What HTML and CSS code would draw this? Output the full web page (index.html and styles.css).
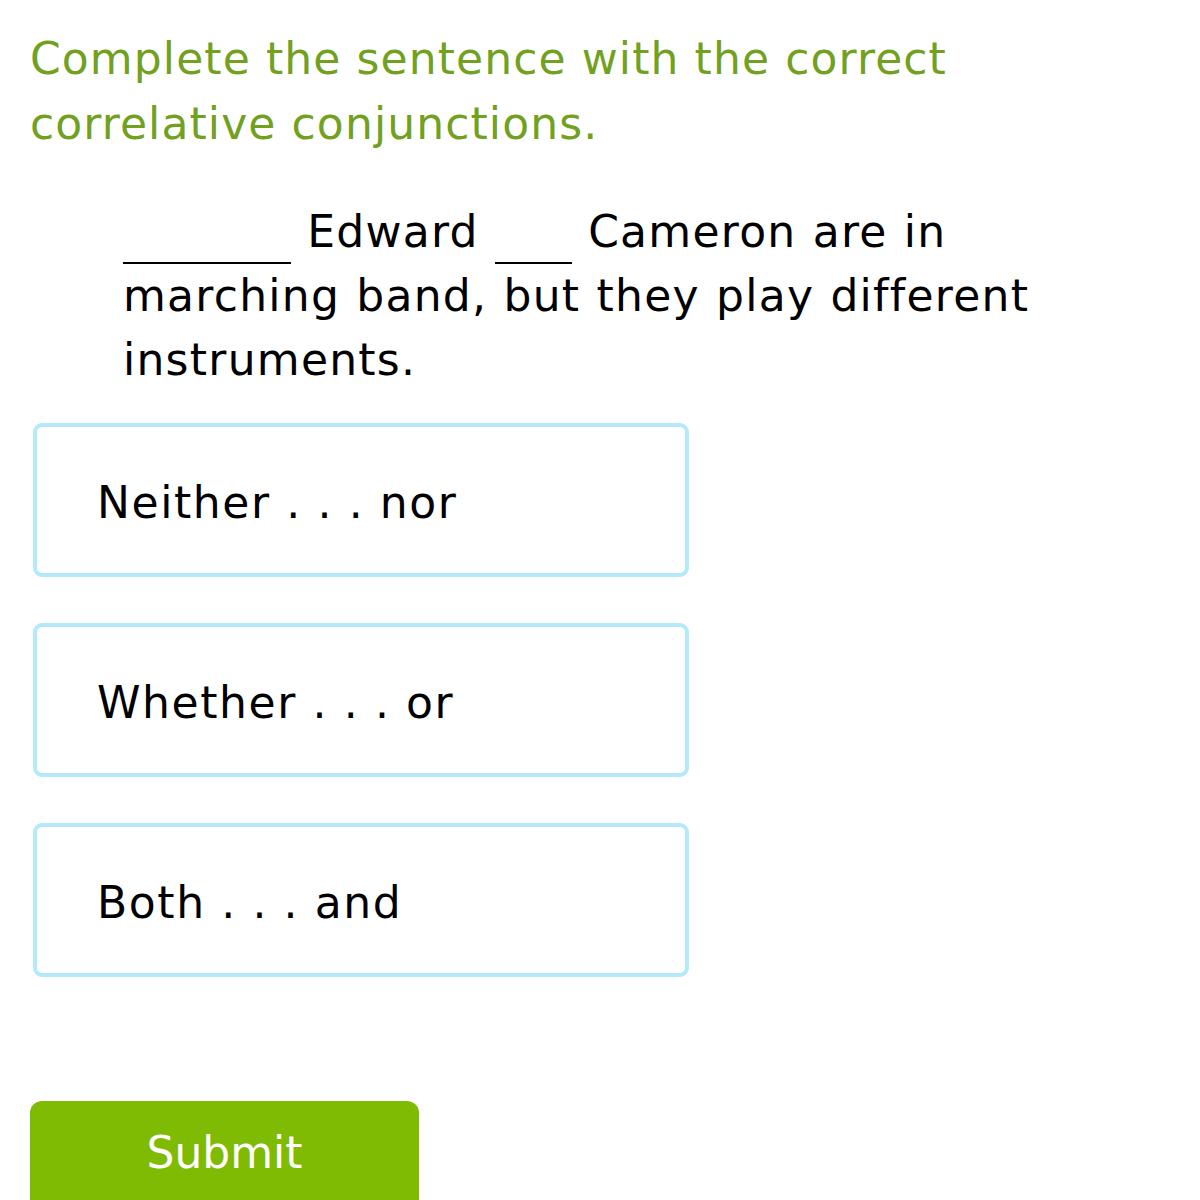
FILE: index.html
```html
<!DOCTYPE html>
<html>
<head>
<meta charset="utf-8">
<link rel="stylesheet" href="styles.css">
</head>
<body>
<div class="page">
  <h1 class="title">Complete the sentence with the correct correlative conjunctions.</h1>
  <p class="sentence"><span class="blank blank-long"></span> Edward <span class="blank blank-short"></span> Cameron are in marching band, but they play different instruments.</p>
  <div class="choices">
    <div class="choice">Neither . . . nor</div>
    <div class="choice">Whether . . . or</div>
    <div class="choice">Both . . . and</div>
  </div>
  <button class="submit">Submit</button>
</div>
</body>
</html>
```
FILE: styles.css
```css
html, body {
  margin: 0;
  padding: 0;
  background: #ffffff;
}
.page {
  font-family: "DejaVu Sans", Verdana, sans-serif;
  padding: 26px 0 0 30px;
  width: 1100px;
}
.title {
  margin: 0;
  font-size: 44px;
  font-weight: normal;
  line-height: 65px;
  letter-spacing: 1.1px;
  color: #72a01f;
  width: 980px;
}
.sentence {
  margin: 44px 0 0 93px;
  font-size: 44px;
  line-height: 64px;
  letter-spacing: 1.25px;
  word-spacing: 1px;
  color: #000;
  width: 940px;
}
.blank {
  display: inline-block;
  border-bottom: 2px solid #000;
  vertical-align: -17px;
}
.blank-long { width: 168px; }
.blank-short { width: 77px; }
.choices {
  margin-top: 31px;
  display: flex;
  flex-direction: column;
  gap: 46px;
  margin-left: 3px;
}
.choice {
  border: 4px solid #b4e9fb;
  border-radius: 9px;
  display: flex;
  align-items: center;
  padding: 4px 0 0 60px;
  box-sizing: border-box;
  width: 656px;
  height: 154px;
  font-size: 44px;
  letter-spacing: 1.6px;
  color: #000;
}
.submit {
  margin-top: 124px;
  width: 389px;
  height: 110px;
  border: none;
  border-radius: 12px;
  background: #80bb03;
  color: #ffffff;
  font-family: "DejaVu Sans", Verdana, sans-serif;
  font-size: 44px;
  padding: 0 0 8px 0;
  display: block;
}
```
